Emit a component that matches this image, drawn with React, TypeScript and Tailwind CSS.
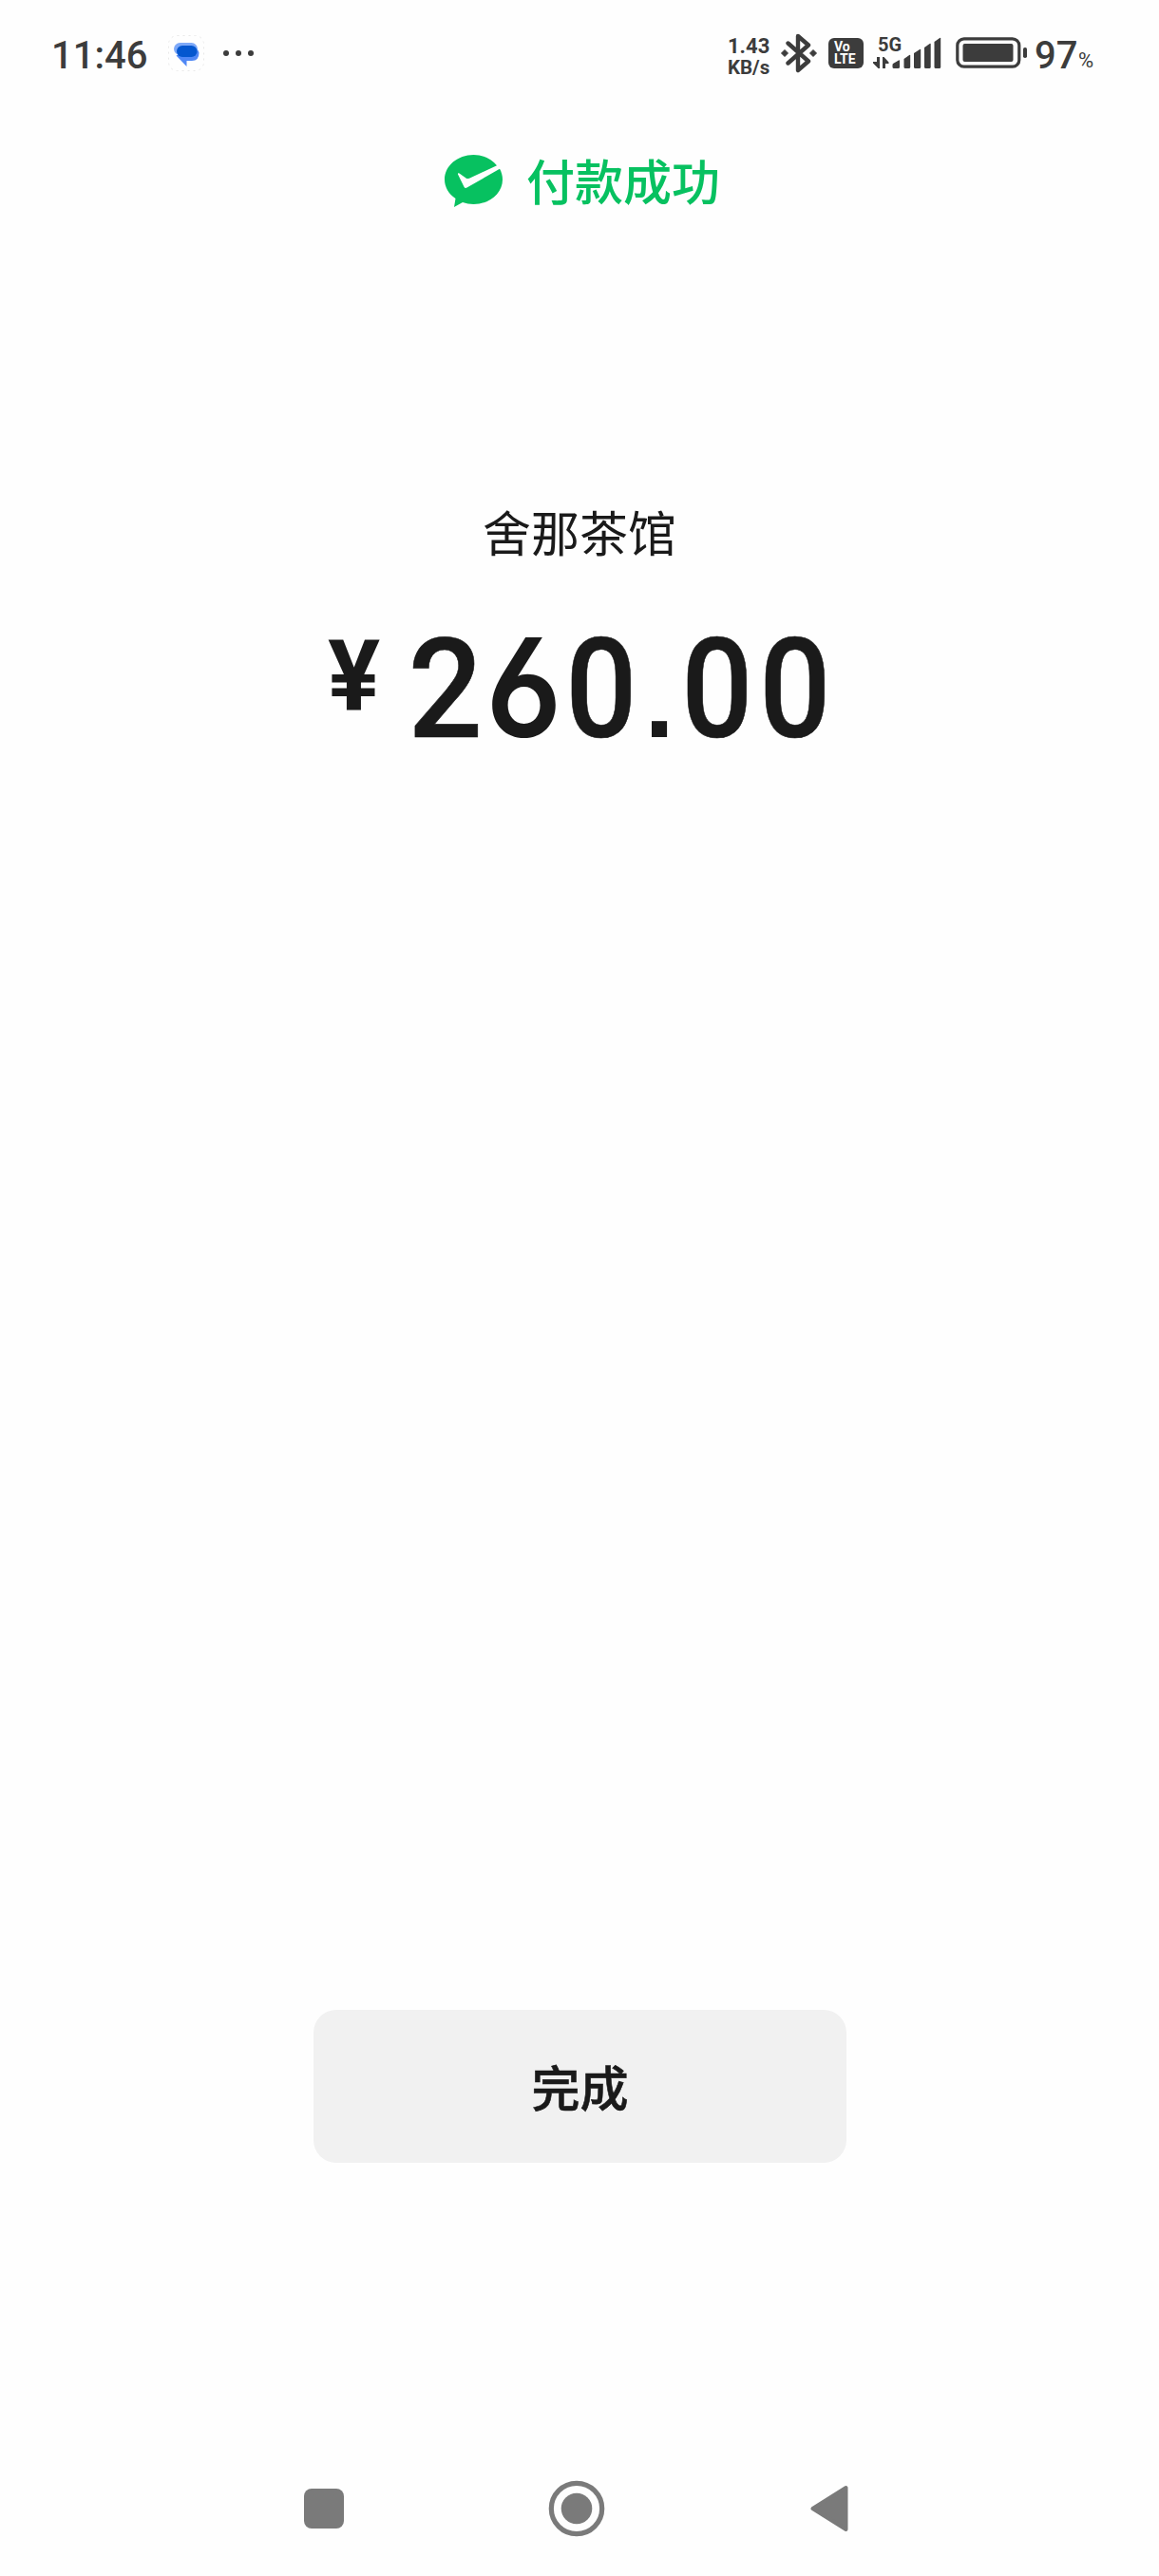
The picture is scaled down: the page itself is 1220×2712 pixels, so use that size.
import clsx from 'clsx';

type Glyph = { char: string; cell: string; face: string };

// Each digit sits in its own cell so the amount keeps a steady rhythm
const amount: Glyph[] = [
  { char: '2', cell: 'w-[82px]', face: 'scale-x-[0.94] [-webkit-text-stroke:0.6px_#1a1a1a]' },
  {
    char: '6',
    cell: 'w-[82px]',
    face: 'font-[Inter] text-[144px] font-semibold [font-feature-settings:"ss01","cv03"] scale-x-[0.92]',
  },
  { char: '0', cell: 'w-[82px]', face: 'scale-x-[0.9] [-webkit-text-stroke:0.6px_#1a1a1a]' },
  { char: '.', cell: 'w-[40px]', face: "font-['Liberation_Sans'] text-[114px] font-bold" },
  { char: '0', cell: 'w-[82px]', face: 'scale-x-[0.9] [-webkit-text-stroke:0.6px_#1a1a1a]' },
  { char: '0', cell: 'w-[82px]', face: 'scale-x-[0.9] [-webkit-text-stroke:0.6px_#1a1a1a]' },
];

function MessagesIcon() {
  return (
    <svg className="ml-[22px] h-[38px] w-[38px]" viewBox="0 0 38 38">
      <rect x="0.5" y="0.5" width="37" height="37" rx="9" fill="none" stroke="#e8e8e8" strokeDasharray="2 4" />
      <path d="M25 12.500q6 0 7.500 6 0 8.500-7.500 8.500H19.500v6L8.500 21.500z" fill="#5088f5" />
      <rect x="6" y="8" width="25" height="13" rx="6.500" fill="#7ea9f8" />
      <rect x="9" y="11" width="21.500" height="12" rx="6" fill="#0457cf" />
    </svg>
  );
}

function BluetoothIcon() {
  return (
    <svg className="ml-[10px] h-[42px] w-[38px]" viewBox="0 0 38 42">
      <path
        d="M7.500 10.500L29 29.500 18 39V3l11 9.500L7.500 31.500"
        fill="none"
        stroke="#3c3c3c"
        strokeWidth="4.400"
        strokeLinejoin="round"
        strokeLinecap="round"
      />
      <path d="M0.500 21l3.500-3.500L7.500 21 4 24.500zM30.500 21l3.500-3.500 3.500 3.500-3.500 3.500z" fill="#3c3c3c" stroke="#3c3c3c" strokeLinejoin="round" />
    </svg>
  );
}

function SignalIcon() {
  return (
    <svg className="h-[34px] w-[72px]" viewBox="0 0 72 34" fill="#3c3c3c">
      <path d="M4 21h3v12H5.500L0 27.500V26h4zM10 33h3v-5h3.500v-1.500L11.500 21H10z" />
      <path d="M21 28l6-3.500q1-.5 1 .5v6.500q0 1.500-1.500 1.500H22q-1.500 0-1.500-1.500V29z" />
      <path d="M32.500 23l5.700-4q1-.5 1 .5V31.500q0 1.500-1.500 1.500H34q-1.500 0-1.500-1.500V24z" />
      <path d="M43 17l6.200-4q1-.5 1 .5V31.500q0 1.500-1.500 1.500H44.500q-1.500 0-1.500-1.500z" />
      <path d="M54 11l5.700-4q1-.5 1 .5V31.500q0 1.500-1.500 1.500H55.500q-1.500 0-1.500-1.500z" />
      <path d="M64.500 5l5.700-4q1-.5 1 .5V31.500q0 1.500-1.500 1.500H66q-1.500 0-1.500-1.500z" />
    </svg>
  );
}

function BatteryIcon() {
  return (
    <svg className="ml-[15px] h-[33px] w-[76px]" viewBox="0 0 76 33">
      <rect x="1.800" y="1.800" width="65" height="29.400" rx="7" fill="none" stroke="#3c3c3c" strokeWidth="3.200" />
      <rect x="7.500" y="7" width="53" height="19" rx="2" fill="#3c3c3c" />
      <rect x="71" y="11" width="4" height="11" rx="1.800" fill="#3c3c3c" />
    </svg>
  );
}

function StatusBar() {
  return (
    <header className="flex h-[111px] items-center pl-[54px] text-[#3c3c3c]">
      <time className="w-[101px] pt-[7px] text-[40px] leading-none font-medium">11:46</time>
      <MessagesIcon />
      <div className="ml-[20px] flex gap-[7px]">
        <i className="size-[6px] rounded-full bg-[#3c3c3c]" />
        <i className="size-[6px] rounded-full bg-[#3c3c3c]" />
        <i className="size-[6px] rounded-full bg-[#3c3c3c]" />
      </div>

      <div className="ml-[499px] w-[46px] pt-[8px] text-[22px] leading-[22px] font-bold">
        <div>1.43</div>
        <div className="text-[20.500px]">KB/s</div>
      </div>
      <BluetoothIcon />
      <div className="ml-[12px] h-[32px] w-[37px] rounded-[6px] bg-[#3c3c3c] pt-[3px] pl-[6px] text-[14px] leading-[13px] font-bold text-white">
        <div>Vo</div>
        <div>LTE</div>
      </div>
      <div className="relative ml-[10px] flex">
        <SignalIcon />
        <span className="absolute -top-[2px] left-[5px] text-[20px] leading-[20px] font-bold">5G</span>
      </div>
      <BatteryIcon />
      <span className="ml-[7px] w-[46px] pt-[7px] text-[40px] leading-none font-medium">97</span>
      <span className="pt-[16px] text-[22px] leading-none">%</span>
    </header>
  );
}

function SuccessHeader() {
  return (
    <div className="flex h-[60px] items-center gap-[25px] pl-[468px] text-[#07c160]">
      <svg className="h-[55px] w-[61px]" viewBox="0 0 61 55">
        <path
          d="M30.500 0C13.700 0 0 11.600 0 26c0 8 4.300 15.200 11.500 20L10 55l9-5c3.600 1.300 7.500 2 11.500 2C47.400 52 61 40.400 61 26c0-4-1.100-7.800-3-11.200L23.500 34.500q-2 1.200-3-.8L14 20.500q-.5-2 1.500-1l7 5q1.500 1 3.500.2L55 11.300C49.500 4.400 40.600 0 30.500 0z"
          fill="#07c160"
        />
      </svg>
      <h1 className="pt-[8px] text-[51px] leading-[60px] font-medium">付款成功</h1>
    </div>
  );
}

function Amount() {
  return (
    <div className="flex pl-[345px] font-medium">
      <span className="w-[83px] pt-[8px] text-[103px] leading-[100px] font-bold">¥</span>
      <div className="flex h-[140px] items-baseline text-[147px] leading-[140px]">
        {amount.map(({ char, cell, face }, i) => (
          <span key={i} className={clsx('flex justify-center', cell)}>
            <span className={face}>{char}</span>
          </span>
        ))}
      </div>
    </div>
  );
}

function NavigationBar() {
  return (
    <nav className="flex h-[60px] items-center pl-[320px]">
      <i className="size-[42px] rounded-[8px] bg-[#7a7a7a]" />
      <svg className="ml-[215px] size-[60px]" viewBox="0 0 60 60">
        <circle cx="30" cy="30" r="26.700" fill="none" stroke="#7a7a7a" strokeWidth="5.200" />
        <circle cx="30" cy="30" r="16.300" fill="#7a7a7a" />
      </svg>
      <svg className="ml-[216px] h-[50px] w-[40px]" viewBox="0 0 40 50">
        <path d="M2.500 25L37.500 3v44z" fill="#7a7a7a" stroke="#7a7a7a" strokeWidth="4" strokeLinejoin="round" />
      </svg>
    </nav>
  );
}

export default function App() {
  return (
    <main className="flex h-[2712px] w-[1220px] flex-col bg-[#fefefe] font-[Roboto,'Noto_Sans_CJK_SC',sans-serif] text-[#1a1a1a]">
      <StatusBar />
      <div className="pt-[49px]">
        <SuccessHeader />
      </div>
      <h2 className="mt-[314px] text-center text-[51px] leading-[60px]">舍那茶馆</h2>
      <div className="mt-[60px]">
        <Amount />
      </div>
      <button className="mt-auto ml-[330px] h-[161px] w-[561px] rounded-[24px] bg-[#f1f1f1] pt-[9px] text-[51px] font-medium [-webkit-text-stroke:0.6px_#1a1a1a]">
        完成
      </button>
      <div className="mt-[334px] pb-[41px]">
        <NavigationBar />
      </div>
    </main>
  );
}
